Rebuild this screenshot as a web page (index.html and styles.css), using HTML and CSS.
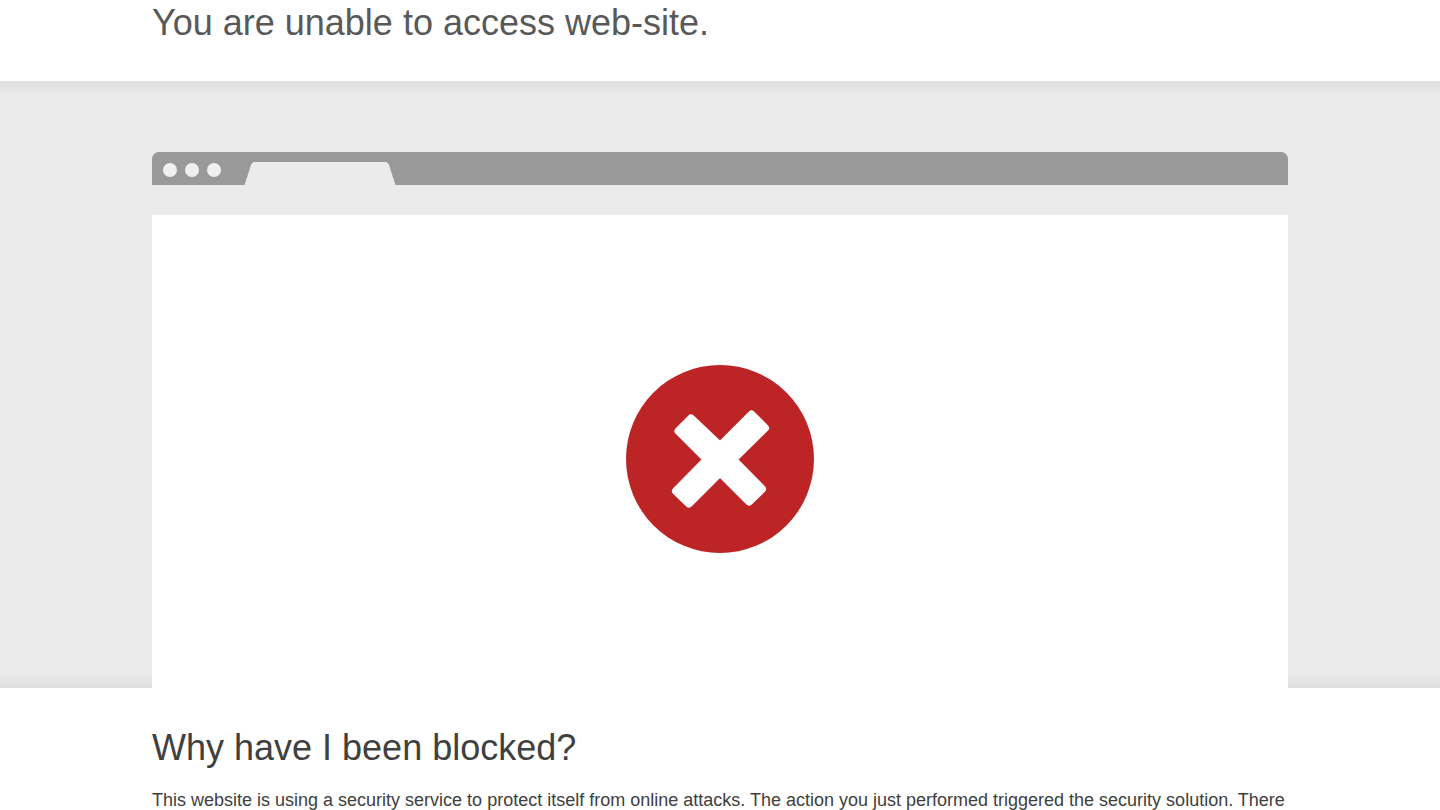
FILE: index.html
```html
<!DOCTYPE html>
<html lang="en">
<head>
<meta charset="utf-8">
<meta name="viewport" content="width=device-width, initial-scale=1">
<title>Access blocked</title>
<link rel="stylesheet" href="styles.css">
</head>
<body>
<header class="header">
  <div class="wrapper">
    <h1 class="subheadline">You are unable to access web-site.</h1>
  </div>
</header>
<main>
  <section class="highlight">
    <div class="wrapper">
      <div class="browser-bar">
        <svg class="browser-controls" viewBox="0 0 250 33" aria-hidden="true">
          <g fill="#f0f0f0">
            <circle cx="18" cy="18" r="7"/>
            <circle cx="40" cy="18" r="7"/>
            <circle cx="62" cy="18" r="7"/>
          </g>
          <path fill="#ebebeb" d="M92.500 33 L99 13 Q100 10 103 10 H233 Q236 10 237 13 L243.500 33 Z"/>
        </svg>
      </div>
      <div class="browser-page">
        <svg class="error-icon" viewBox="0 0 188 188" role="img" aria-label="Blocked">
          <circle cx="94" cy="94" r="94" fill="#bd2426"/>
          <path fill="#fff" stroke="#fff" stroke-width="8" stroke-linejoin="round" d="M65 53.500 L94 81 L125.500 49.500 L139 63 L107 94.500 L136 124 L123 136.500 L94 107.500 L63 138.500 L50 126 L81 94.500 L52.500 66 Z"/>
        </svg>
      </div>
    </div>
  </section>
  <section class="wrapper reason">
    <h2 class="reason-title">Why have I been blocked?</h2>
    <p class="reason-text">This website is using a security service to protect itself from online attacks. The action you just performed triggered the security solution. There</p>
  </section>
</main>
</body>
</html>
```
FILE: styles.css
```css
body {
  margin: 0;
  background: #fff;
  color: #404040;
  font-family: "Liberation Sans", Arial, sans-serif;
}

.wrapper {
  width: 79%;
  max-width: 1136px;
  margin: 0 auto;
}

.header {
  padding: 2px 0 37px;
}

.subheadline,
.reason-title {
  margin: 0;
  font-size: 36px;
  font-weight: 400;
  line-height: 42px;
}

.subheadline {
  color: #595959;
}

.highlight {
  padding-top: 71px;
  background:
    linear-gradient(to bottom, #dedede, #ebebeb) top / 100% 16px no-repeat,
    linear-gradient(to top, #dedede, #ebebeb) bottom / 100% 16px no-repeat,
    #ebebeb;
}

.browser-bar {
  height: 33px;
  margin-bottom: 30px;
  overflow: hidden;
  border-radius: 7px 7px 0 0;
  background: #999;
}

.browser-controls {
  display: block;
  width: 250px;
  height: 33px;
}

.browser-page {
  display: flex;
  justify-content: center;
  padding: 150px 0 135px;
  background: #fff;
}

.error-icon {
  width: 188px;
  height: 188px;
}

.reason {
  padding-top: 39px;
}

.reason-text {
  margin: 18px 0 0;
  font-size: 18px;
  line-height: 26px;
}
```
